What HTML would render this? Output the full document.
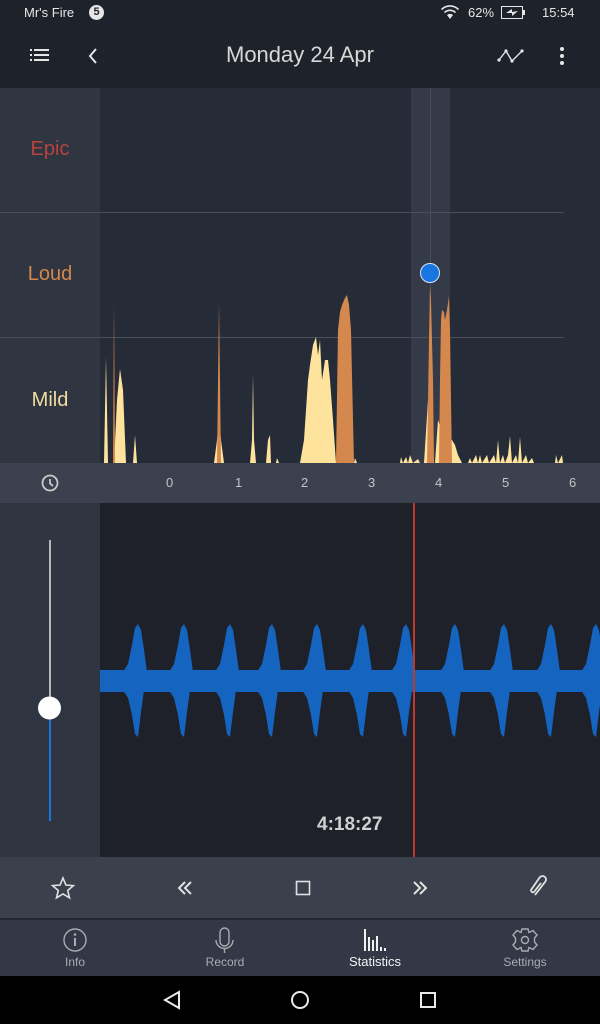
<!DOCTYPE html>
<html><head><meta charset="utf-8"><style>
*{margin:0;padding:0;box-sizing:border-box}
body{width:600px;height:1024px;overflow:hidden;background:#1e222b;font-family:"Liberation Sans",sans-serif;position:relative}
.a{position:absolute}
</style></head><body>
<div class="a" style="left:0;top:0;width:600px;height:88px;background:#1e222b"></div>
<div class="a" style="left:24px;top:5px;color:#e6e6e6;font-size:13px">Mr's Fire</div>
<div class="a" style="left:89px;top:5px;width:15px;height:15px;border-radius:50%;background:#e6e6e6;color:#1e222b;font-size:11px;font-weight:bold;text-align:center;line-height:15px">5</div>
<svg class="a" style="left:440px;top:4px" width="20" height="16" viewBox="0 0 20 16"><g fill="none" stroke="#e6e6e6" stroke-width="1.6"><path d="M1.5 5.5 A12 12 0 0 1 18.5 5.5"/><path d="M4.5 8.5 A8 8 0 0 1 15.5 8.5"/></g><path d="M10 15 L7 11 A4.5 4.5 0 0 1 13 11Z" fill="#e6e6e6"/></svg>
<div class="a" style="left:468px;top:5px;color:#e6e6e6;font-size:13px">62%</div>
<div class="a" style="left:501px;top:6px;width:22px;height:13px;border:1.5px solid #e6e6e6;background:#1e222b"></div>
<div class="a" style="left:523px;top:10px;width:2px;height:5px;background:#e6e6e6"></div>
<svg class="a" style="left:503px;top:8px" width="18" height="9"><path d="M3 5 L9 1 L9 4 L15 3 L9 8 L9 5Z" fill="#e6e6e6"/></svg>
<div class="a" style="left:542px;top:5px;color:#e6e6e6;font-size:13px">15:54</div>
<svg class="a" style="left:30px;top:48px" width="20" height="14"><g fill="#e6e6e6"><rect x="0" y="1" width="2" height="2"/><rect x="4" y="1" width="15" height="2"/><rect x="0" y="6" width="2" height="2"/><rect x="4" y="6" width="15" height="2"/><rect x="0" y="11" width="2" height="2"/><rect x="4" y="11" width="15" height="2"/></g></svg>
<svg class="a" style="left:86px;top:46px" width="14" height="20"><path d="M10 3 L4 10 L10 17" fill="none" stroke="#e6e6e6" stroke-width="2"/></svg>
<div class="a" style="left:0;top:42px;width:600px;text-align:center;color:#d8d8d8;font-size:22px">Monday 24 Apr</div>
<svg class="a" style="left:496px;top:46px" width="32" height="20"><path d="M3 14 L10 5 L16 15 L26 5" fill="none" stroke="#e6e6e6" stroke-width="1.4"/><g fill="#e6e6e6"><circle cx="3" cy="14" r="1.6"/><circle cx="10" cy="5" r="1.6"/><circle cx="16" cy="15" r="1.6"/><circle cx="26" cy="5" r="1.6"/></g></svg>
<svg class="a" style="left:558px;top:46px" width="8" height="20"><g fill="#e6e6e6"><circle cx="4" cy="3" r="2"/><circle cx="4" cy="10" r="2"/><circle cx="4" cy="17" r="2"/></g></svg>
<div class="a" style="left:0;top:88px;width:600px;height:375px;background:#262b38"></div>
<div class="a" style="left:0;top:88px;width:100px;height:375px;background:#2f3541"></div>
<div class="a" style="left:411px;top:88px;width:39px;height:375px;background:#343a47"></div>
<div class="a" style="left:430px;top:88px;width:1px;height:375px;background:#474d59"></div>
<div class="a" style="left:0;top:212px;width:564px;height:1px;background:#4a4f5b"></div>
<div class="a" style="left:0;top:337px;width:564px;height:1px;background:#4a4f5b"></div>
<div class="a" style="left:0;top:138px;width:100px;text-align:center;color:#b8443d;font-size:20px">Epic</div>
<div class="a" style="left:0;top:263px;width:100px;text-align:center;color:#d4874a;font-size:20px">Loud</div>
<div class="a" style="left:0;top:389px;width:100px;text-align:center;color:#f2dda0;font-size:20px">Mild</div>
<svg class="a" style="left:0;top:0" width="600" height="463">
<g fill="#fde39c">
<path d="M104,463 L106,357 L108,463Z"/>
<path d="M114,463 L117,400 L120,369 L123,390 L126,463Z"/>
<path d="M133,463 L135,435 L137,463Z"/>
<path d="M214,463 L217,440 L219,420 L221,440 L224,463Z"/>
<path d="M250,463 L252,440 L253,374 L254,440 L256,463Z"/>
<path d="M266,463 L268,440 L270,435 L271,463Z"/>
<path d="M276,463 L277,458 L279,463Z"/>
<path d="M300,463 L304,440 L308,380 L310,365 L313,345 L316,337 L318,355 L320,340 L322,380 L325,360 L328,360 L330,380 L333,420 L336,463Z"/>
<path d="M354,463 L355,458 L357,463Z"/>
<path d="M400,463 L401,457 L403,463 L406,457 L408,463 L410,455 L413,463 L418,459 L420,463Z"/>
<path d="M424,463 L428,400 L430,463Z M435,463 L438,420 L445,440 L452,440 L455,445 L458,455 L462,463Z"/>
<path d="M468,463 L470,458 L472,463 L476,455 L478,463 L480,455 L482,463 L487,455 L489,463 L494,455 L496,463 L498,440 L500,463 L503,455 L505,463 L508,455 L510,436 L512,463 L516,455 L518,463 L520,437 L522,463 L526,455 L528,463 L532,458 L534,463 L555,463 L556,455 L558,463 L562,455 L563,463Z"/>
</g>
<g fill="#d4884e">
<path d="M113,463 L114,303 L115,463Z"/>
<path d="M217,463 L219,302 L221,463Z"/>
<path d="M336,463 L338,330 L340,312 L342,305 L345,298 L347,295 L349,305 L351,330 L353,420 L354,463Z"/>
<path d="M427,463 L429,340 L430,285 L431,300 L433,380 L434,463Z"/>
<path d="M439,463 L440,380 L441,320 L442,310 L444,312 L445,320 L447,310 L449,296 L450,330 L451,400 L452,463Z"/>
</g>
<circle cx="430" cy="273" r="9.5" fill="#1976e0" stroke="#d9e4f3" stroke-width="1"/>
</svg>
<div class="a" style="left:0;top:463px;width:600px;height:40px;background:#3b414e"></div>
<svg class="a" style="left:40px;top:473px" width="20" height="20"><circle cx="10" cy="10" r="7.5" fill="none" stroke="#c8c8c8" stroke-width="1.8"/><path d="M10 6 V10.5 L13 13" fill="none" stroke="#c8c8c8" stroke-width="1.8"/></svg>
<div class="a" style="top:475px;left:0;width:600px;height:20px;color:#c2c4c8;font-size:13px">
<span class="a" style="left:166px">0</span><span class="a" style="left:235px">1</span><span class="a" style="left:301px">2</span><span class="a" style="left:368px">3</span><span class="a" style="left:435px">4</span><span class="a" style="left:502px">5</span><span class="a" style="left:569px">6</span></div>
<div class="a" style="left:0;top:503px;width:100px;height:354px;background:#2f3541"></div>
<div class="a" style="left:100px;top:503px;width:500px;height:354px;background:#1e212a"></div>
<svg class="a" style="left:0;top:0" width="600" height="857">
<g fill="#1565c0">
<path d="M100,670 L600,670 L600,692 L100,692Z"/>
<path id="sp" d="M-15,672 L-10,664 L-6,645 L-3,628 L0,624 L3,630 L6,650 L9,672 L6,690 L3,712 L0,737 L-3,734 L-6,715 L-10,698 L-15,690Z"/>
<use href="#sp" x="138"/><use href="#sp" x="184"/><use href="#sp" x="230"/><use href="#sp" x="272"/><use href="#sp" x="317"/><use href="#sp" x="363"/><use href="#sp" x="406"/><use href="#sp" x="455"/><use href="#sp" x="504"/><use href="#sp" x="551"/><use href="#sp" x="596"/>
</g>
<rect x="0" y="503" width="100" height="354" fill="#2f3541"/>
<rect x="49" y="540" width="2" height="168" fill="#b8b8b8"/>
<rect x="49" y="708" width="2" height="113" fill="#1976e0"/>
<circle cx="49.5" cy="708" r="11.5" fill="#fff"/>
<rect x="413" y="503" width="2" height="354" fill="#c0392b"/>
</svg>
<div class="a" style="left:317px;top:814px;color:#d0d0d0;font-size:19px;font-weight:bold">4:18:27</div>
<div class="a" style="left:0;top:857px;width:600px;height:61px;background:#3a414d"></div>
<div class="a" style="left:0;top:918px;width:600px;height:2px;background:#22262e"></div>
<svg class="a" style="left:0;top:857px" width="600" height="61">
<g fill="none" stroke="#e0e0e0" stroke-width="1.6">
<path d="M63,21 L65.9,28 L73.4,28.6 L67.7,33.5 L69.5,40.8 L63,36.9 L56.5,40.8 L58.3,33.5 L52.6,28.6 L60.1,28Z"/>
<path d="M185,25 L179,31 L185,37 M191,25 L185,31 L191,37" stroke-width="2"/>
<rect x="296.5" y="24.5" width="13" height="13"/>
<path d="M414,25 L420,31 L414,37 M420,25 L426,31 L420,37" stroke-width="2"/>
<path d="M535,38 L545,25 A3.5 3.5 0 0 0 540,20 L531,33 A2 2 0 0 0 534,35 L541,26" stroke-width="1.8"/>
</g></svg>
<div class="a" style="left:0;top:920px;width:600px;height:56px;background:#323845"></div>
<svg class="a" style="left:0;top:920px" width="600" height="56">
<g fill="none" stroke="#a8acb3" stroke-width="1.4">
<circle cx="75" cy="20" r="11"/><path d="M75 18 V26" stroke-width="2"/>
<rect x="220" y="8" width="9" height="18" rx="4.5"/><path d="M216 20 A8.5 8.5 0 0 0 233 20 M224.5 28.5 V33"/>
<circle cx="525" cy="20" r="3.5"/>
<path d="M522 9 L528 9 L529 12.5 L533 10.5 L537 15 L534.5 18 L534.5 22 L537 25 L533 29.5 L529 27.5 L528 31 L522 31 L521 27.5 L517 29.5 L513 25 L515.5 22 L515.5 18 L513 15 L517 10.5 L521 12.5Z"/>
</g>
<circle cx="75" cy="14.5" r="1.3" fill="#a8acb3"/>
<g fill="#f0f0f0"><rect x="364" y="9" width="2" height="22"/><rect x="368" y="17" width="2" height="14"/><rect x="372" y="20" width="2" height="11"/><rect x="376" y="16" width="2" height="15"/><rect x="380" y="27" width="2" height="4"/><rect x="384" y="28" width="2" height="3"/></g>
</svg>
<div class="a" style="left:0;top:955px;width:150px;text-align:center;color:#a8acb3;font-size:12px">Info</div>
<div class="a" style="left:150px;top:955px;width:150px;text-align:center;color:#a8acb3;font-size:12px">Record</div>
<div class="a" style="left:300px;top:954px;width:150px;text-align:center;color:#f4f4f4;font-size:13px">Statistics</div>
<div class="a" style="left:450px;top:955px;width:150px;text-align:center;color:#a8acb3;font-size:12px">Settings</div>
<div class="a" style="left:0;top:976px;width:600px;height:48px;background:#000"></div>
<svg class="a" style="left:0;top:976px" width="600" height="48"><g fill="none" stroke="#e8e8e8" stroke-width="2"><path d="M179,16 L165,24 L179,32Z"/><circle cx="300" cy="24" r="8"/><rect x="421" y="17" width="14" height="14"/></g></svg>
</body></html>
